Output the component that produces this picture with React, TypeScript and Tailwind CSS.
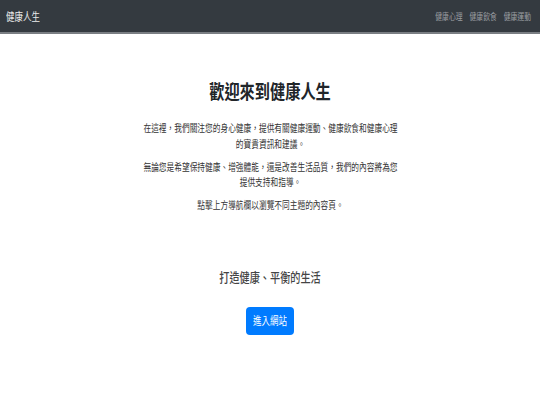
import React from "react";

export default function App() {
  return (
    <div className="min-h-screen bg-white font-['Noto_Sans_CJK_TC','Noto_Sans_CJK_SC',sans-serif]">
      <nav className="h-[34px] bg-[#343a40] border-b-2 border-[#7a7e83] flex items-center justify-between pl-[6px] pr-[9px]">
        <span className="inline-block origin-left scale-x-[0.77] text-[11px] leading-none text-[#ececec]">
          健康人生
        </span>
        <div className="flex origin-right scale-x-[0.76] gap-[9px] text-[9px] leading-none text-[#9a9da0]">
          <a>健康心理</a>
          <a>健康飲食</a>
          <a>健康運動</a>
        </div>
      </nav>
      <main className="flex flex-col items-center pt-[45px]">
        <h1 className="inline-block origin-center scale-x-[0.8] text-[19px] leading-[24px] font-bold text-[#212529]">
          歡迎來到健康人生
        </h1>
        <div className="mt-[17px] flex flex-col items-center gap-[7.5px]">
          <p className="w-[335px] origin-center scale-x-[0.77] text-center text-[10px] leading-[15.5px] text-[#333]">
            在這裡，我們關注您的身心健康，提供有關健康運動、健康飲食和健康心理的寶貴資訊和建議。
          </p>
          <p className="w-[335px] origin-center scale-x-[0.77] text-center text-[10px] leading-[15.5px] text-[#333]">
            無論您是希望保持健康、增強體能，還是改善生活品質，我們的內容將為您提供支持和指導。
          </p>
          <p className="w-[335px] origin-center scale-x-[0.77] text-center text-[10px] leading-[15.5px] text-[#333]">
            點擊上方導航欄以瀏覽不同主題的內容頁。
          </p>
        </div>
        <h2 className="mt-[55px] inline-block origin-center scale-x-[0.78] text-[13px] leading-[18px] font-medium text-[#444]">
          打造健康、平衡的生活
        </h2>
        <button className="mt-[21px] w-[48px] h-[28px] rounded-[4px] bg-[#007bff] flex items-center justify-center">
          <span className="inline-block origin-center scale-x-[0.77] text-[11px] leading-none text-white whitespace-nowrap">
            進入網站
          </span>
        </button>
      </main>
    </div>
  );
}
